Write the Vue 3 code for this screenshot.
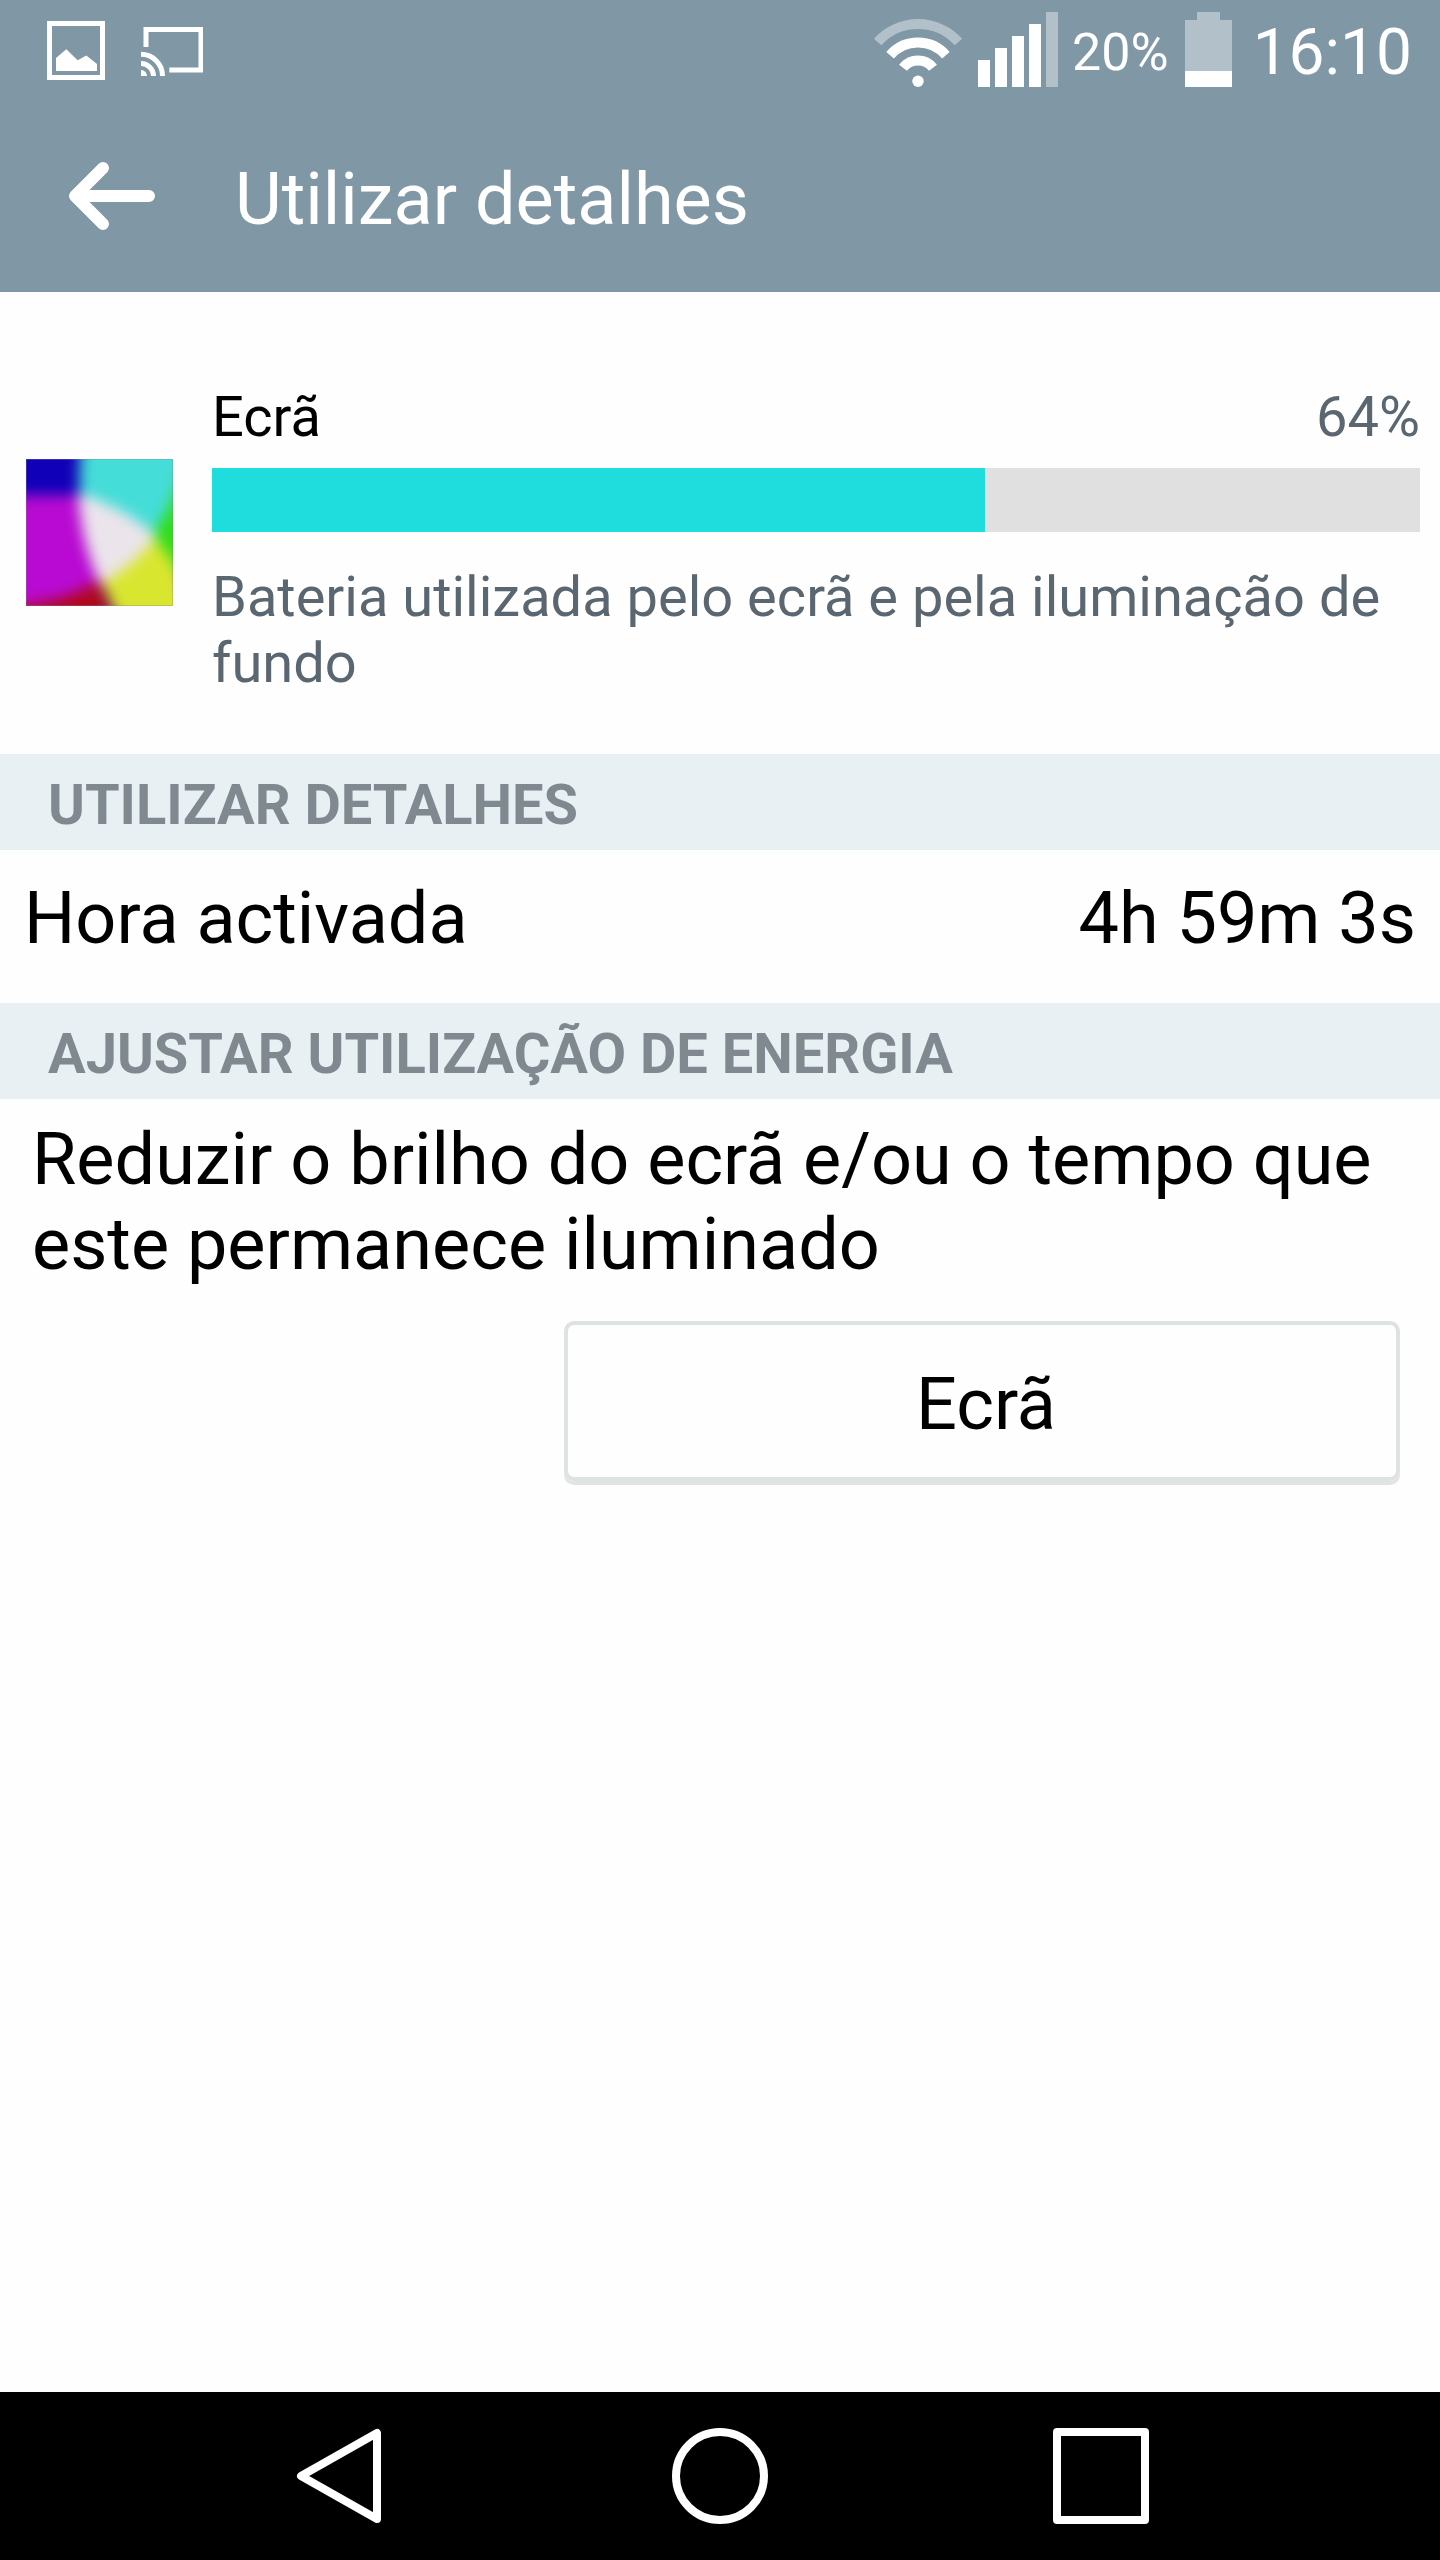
<script setup>
const usage = {
  name: 'Ecrã',
  percent: 64,
  description: 'Bateria utilizada pelo ecrã e pela iluminação de fundo',
}
const details = [{ label: 'Hora activada', value: '4h 59m 3s' }]
</script>

<template>
  <div class="screen">
    <header class="top">
      <div class="status">
        <div class="status-group notifications">
          <svg width="58" height="59" viewBox="0 0 58 59" aria-hidden="true">
            <rect x="2.5" y="2.5" width="53" height="54" fill="none" stroke="#fff" stroke-width="5" />
            <path d="M9 37L19.300 28.300L30.700 39.300L39.300 34.600L50 43V50H9Z" fill="#fff" />
          </svg>
          <svg width="62" height="50" viewBox="0 0 62 50" aria-hidden="true">
            <path d="M5 21V3.500H60V44H28.300" fill="none" stroke="#fff" stroke-width="5" />
            <circle cx="0" cy="50" r="6" fill="#fff" />
            <path d="M0 37.500A12.500 12.500 0 0 1 12.500 50M0 28.300A21.500 21.500 0 0 1 21.500 50" fill="none" stroke="#fff" stroke-width="5" />
          </svg>
        </div>
        <div class="status-group system">
          <svg class="wifi" width="88" height="75" viewBox="0 0 88 75" aria-hidden="true">
            <path d="M3.600 30A54.500 54.500 0 0 1 84.400 30" fill="none" stroke="#b2c1c9" stroke-width="10" />
            <path d="M16.100 43.200A37 37 0 0 1 71.900 43.200M29 55.800A19 19 0 0 1 59 55.800" fill="none" stroke="#fff" stroke-width="10" />
            <circle cx="44" cy="69.300" r="5.700" fill="#fff" />
          </svg>
          <svg class="signal" width="80" height="75" viewBox="0 0 80 75" aria-hidden="true">
            <path d="M0 48H12V75H0ZM17 36H29V75H17ZM34 24H46V75H34ZM51 12H63V75H51Z" fill="#fff" />
            <path d="M68 0H80V75H68Z" fill="#b2c1c9" />
          </svg>
          <span class="charge">20%</span>
          <svg class="battery" width="47" height="75" viewBox="0 0 47 75" aria-hidden="true">
            <path d="M0 8H12V0H35V8H47V59H0Z" fill="#b2c1c9" />
            <path d="M0 59H47V75H0Z" fill="#fff" />
          </svg>
          <time class="clock">16:10</time>
        </div>
      </div>
      <div class="action-bar">
        <button class="back" type="button" aria-label="Voltar">
          <svg width="86" height="68" viewBox="0 0 86 68" aria-hidden="true">
            <path d="M34 6L6 34L34 62M6 34H80" fill="none" stroke="#fff" stroke-width="12" stroke-linecap="round" stroke-linejoin="round" />
          </svg>
        </button>
        <h1 class="title">Utilizar detalhes</h1>
      </div>
    </header>

    <main class="content">
      <section class="summary">
        <svg class="app-icon" width="147" height="147" viewBox="0 0 147 147" aria-hidden="true">
          <defs>
            <filter id="soft" filterUnits="userSpaceOnUse" x="-40" y="-40" width="227" height="227" color-interpolation-filters="sRGB">
              <feGaussianBlur stdDeviation="7" />
            </filter>
          </defs>
          <g filter="url(#soft)">
            <rect x="-40" y="-40" width="227" height="227" fill="#1000b8" />
            <path d="M-40 36H54L90 187H-40Z" fill="#b80ad2" />
            <path d="M-40 150Q36 146 72 122L100 187H-40Z" fill="#b0081c" />
            <path d="M60 -40H187V15H156Q148 52 127 78Q98 52 54 37Q51 0 60 -40Z" fill="#44ddd8" />
            <path d="M187 10H157Q146 52 124 78L150 116H187Z" fill="#30dd18" />
            <path d="M75 123Q102 104 124 76Q140 88 156 120L187 187H102Q90 155 75 123Z" fill="#d9e62f" />
            <path d="M52 34Q98 48 131 77Q108 107 74 125Q55 84 52 34Z" fill="#ebe4eb" />
          </g>
          <rect x="0.500" y="0.500" width="146" height="146" fill="none" stroke="#888" stroke-opacity="0.350" />
        </svg>
        <div class="usage">
          <div class="usage-head">
            <span class="usage-name">{{ usage.name }}</span>
            <span>{{ usage.percent }}%</span>
          </div>
          <div class="bar" role="progressbar" :aria-label="usage.name" :aria-valuenow="usage.percent" aria-valuemin="0" aria-valuemax="100">
            <div class="bar-fill" :style="{ width: usage.percent + '%' }"></div>
          </div>
          <p class="usage-text">{{ usage.description }}</p>
        </div>
      </section>

      <h2 class="section-title">UTILIZAR DETALHES</h2>
      <dl class="details">
        <div v-for="item in details" :key="item.label" class="detail">
          <dt>{{ item.label }}</dt>
          <dd>{{ item.value }}</dd>
        </div>
      </dl>

      <h2 class="section-title">AJUSTAR UTILIZAÇÃO DE ENERGIA</h2>
      <section class="adjust">
        <p class="adjust-text">Reduzir o brilho do ecrã e/ou o tempo que este permanece iluminado</p>
        <button class="adjust-button" type="button">Ecrã</button>
      </section>
    </main>

    <nav class="nav">
      <button class="nav-button" type="button" aria-label="Anterior">
        <svg width="96" height="96" viewBox="0 0 96 96" aria-hidden="true">
          <path d="M86 5V91L10 48Z" fill="none" stroke="#fff" stroke-width="8" stroke-linejoin="round" />
        </svg>
      </button>
      <button class="nav-button" type="button" aria-label="Início">
        <svg width="96" height="96" viewBox="0 0 96 96" aria-hidden="true">
          <circle cx="48" cy="48" r="44" fill="none" stroke="#fff" stroke-width="8" />
        </svg>
      </button>
      <button class="nav-button" type="button" aria-label="Recentes">
        <svg width="96" height="96" viewBox="0 0 96 96" aria-hidden="true">
          <rect x="4" y="4" width="88" height="88" fill="none" stroke="#fff" stroke-width="8" stroke-linejoin="round" />
        </svg>
      </button>
    </nav>
  </div>
</template>

<style>
body {
  margin: 0;
  background: #fefefe;
}
</style>

<style scoped>
.screen {
  display: flex;
  flex-direction: column;
  min-height: 100vh;
  font-family: Roboto, "Noto Sans", sans-serif;
  font-size: 72px;
  line-height: 85px;
  color: #000;
  background: #fefefe;
}

svg {
  display: block;
  flex: none;
}

h1,
h2,
p,
dl,
dd {
  margin: 0;
}

button {
  padding: 0;
  border: 0;
  background: none;
  font: inherit;
  color: inherit;
}

.top {
  color: #fff;
  background: #8097a5;
}

.status {
  display: flex;
  justify-content: space-between;
  height: 88px;
  padding: 12px 28px 0 47px;
}

.status-group {
  display: flex;
  align-items: flex-start;
}

.notifications {
  align-items: center;
  gap: 36px;
  height: 77px;
}

.signal {
  margin-left: 16px;
}

.charge {
  margin-left: 14px;
  font-size: 52px;
  line-height: 82px;
}

.battery {
  margin-left: 16px;
}

.clock {
  margin-left: 21px;
  font-size: 64px;
  line-height: 82px;
}

.action-bar {
  display: flex;
  align-items: center;
  height: 192px;
  padding: 0 69px;
  gap: 80px;
}

.title {
  padding-top: 6px;
  font-size: 72px;
  font-weight: 400;
}

.content {
  flex: 1;
}

.summary {
  display: flex;
  align-items: flex-start;
  gap: 39px;
  padding: 92px 20px 58px 26px;
  font-size: 56px;
  line-height: 66px;
  color: #5b6770;
}

.app-icon {
  margin-top: 75px;
}

.usage {
  flex: 1;
}

.usage-head {
  display: flex;
  justify-content: space-between;
}

.usage-name {
  color: #000;
}

.bar {
  height: 64px;
  margin: 18px 0 32px;
  background: #e0e0e0;
}

.bar-fill {
  height: 100%;
  background: #1fdcdd;
}

.section-title {
  padding: 18px 48px 12px;
  font-size: 56px;
  font-weight: 700;
  line-height: 66px;
  color: #7f898f;
  background: #e8f0f4;
}

.detail {
  display: flex;
  justify-content: space-between;
  padding: 26px 24px 42px;
}

.adjust {
  display: flex;
  flex-direction: column;
  padding: 18px 40px 40px 32px;
}

.adjust-button {
  align-self: flex-end;
  box-sizing: border-box;
  width: 836px;
  max-width: 100%;
  height: 160px;
  margin-top: 34px;
  padding: 6px 0 0 8px;
  border: 4px solid #dde2e2;
  border-radius: 10px;
  box-shadow: 0 4px 0 #e3e3e3;
}

.nav {
  display: grid;
  grid-template-columns: repeat(3, 1fr);
  height: 168px;
  padding: 0 148px;
  background: #000;
}

.nav-button {
  display: flex;
  align-items: center;
  justify-content: center;
}
</style>
